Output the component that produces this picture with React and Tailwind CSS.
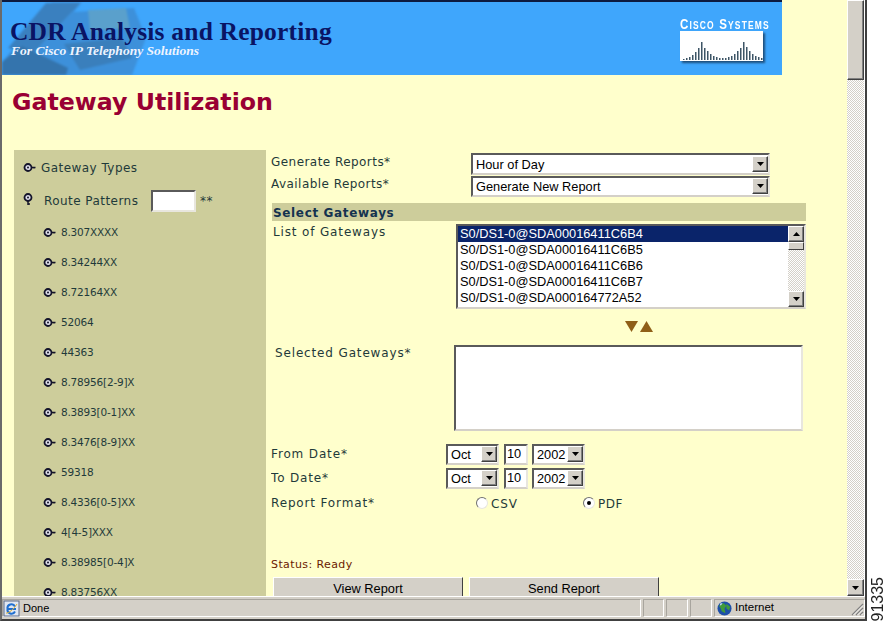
import React from 'react';

const patterns = ['8.307XXXX', '8.34244XX', '8.72164XX', '52064', '44363', '8.78956[2-9]X', '8.3893[0-1]XX', '8.3476[8-9]XX', '59318', '8.4336[0-5]XX', '4[4-5]XXX', '8.38985[0-4]X', '8.83756XX'];
const gateways = ['S0/DS1-0@SDA00016411C6B4', 'S0/DS1-0@SDA00016411C6B5', 'S0/DS1-0@SDA00016411C6B6', 'S0/DS1-0@SDA00016411C6B7', 'S0/DS1-0@SDA000164772A52'];
const bars = [1, 2, 3, 5, 8, 12, 18, 12, 9, 6, 4, 3, 2, 2, 2, 3, 4, 6, 9, 12, 18, 13, 9, 6, 4, 3, 2];

// round key-shaped tree bullet
function Bullet({ open, className = '' }) {
  return (
    <svg width="13" height="13" viewBox="0 0 13 13" className={`shrink-0 ${className}`}>
      {open ? <path d="M6 7v5M6 11h2" stroke="#14142a" strokeWidth="1.500" /> : <path d="M7 6.500h5.500M11 6.500v1" stroke="#14142a" strokeWidth="1.500" />}
      <circle cx={open ? 6 : 5} cy={open ? 4.500 : 6.500} r="3.500" fill="#dcdce8" stroke="#14142a" strokeWidth="1.800" />
      <circle cx={open ? 6 : 5} cy={open ? 4.500 : 6.500} r="1" fill="#14142a" />
    </svg>
  );
}

function ArrowBtn({ up, className }) {
  return (
    <div className={`flex items-center justify-center bg-[#d4d0c8] border border-t-white border-l-white border-r-[#404040] border-b-[#404040] shadow-[inset_-1px_-1px_0_#808080] ${className}`}>
      <svg width="7" height="4" viewBox="0 0 7 4">
        <path d={up ? 'M3.500 0L7 4H0z' : 'M0 0h7L3.500 4z'} fill="#000" />
      </svg>
    </div>
  );
}

function Dropdown({ value, className }) {
  return (
    <div className={`flex items-center bg-white border-2 border-t-[#5a5a5a] border-l-[#5a5a5a] border-r-[#e8e6de] border-b-[#d4d0c8] text-[12.800px] leading-[15px] text-black [font-family:'Liberation_Sans',sans-serif] ${className}`}>
      <span className="flex-1 pl-[3px]">{value}</span>
      <ArrowBtn className="w-[16px] h-[16px] shrink-0" />
    </div>
  );
}

function Radio({ checked }) {
  return (
    <span className="flex items-center justify-center w-[12px] h-[12px] rounded-full bg-white border border-t-[#707070] border-l-[#707070] border-r-[#e8e6de] border-b-[#e8e6de]">
      {checked && <span className="w-[4px] h-[4px] rounded-full bg-black" />}
    </span>
  );
}

function Label({ wide, className = '', children }) {
  return <div className={`text-[12px] leading-[14px] text-[#1f3a3a] ${wide ? 'tracking-[0.85px]' : 'tracking-[0.45px]'} ${className}`}>{children}</div>;
}

function Banner() {
  return (
    <div className="relative flex h-[73px] w-[780px] shrink-0 items-start justify-between overflow-hidden bg-[#3fa6fc]">
      <svg width="160" height="73" viewBox="0 0 160 73" className="absolute left-0 top-0 blur-[1px]">
        <path d="M0 60L50 0h30l-8 10 60-4 12 30-14 37H0z" fill="#3d90da" />
        <path d="M44 1h34L30 52 6 46z" fill="#3a80bf" />
        <path d="M86 8l38 -2 4 20-40 3z" fill="#5aa0cc" />
        <path d="M0 60L20 44l46 22-2 7H0z" fill="#3474ad" />
        <path d="M62 42l58-6 10 20-52 12z" fill="#3a7fbc" />
      </svg>
      <div className="relative pl-[8px] pt-[19px] [font-family:'Liberation_Serif',serif]">
        <div className="whitespace-nowrap text-[25.500px] font-bold leading-[22px] tracking-[0.2px] text-[#0a1464]">CDR Analysis and Reporting</div>
        <div className="whitespace-nowrap pl-[1px] pt-[1px] text-[13.500px] font-bold italic leading-[13px] text-[#eef4ff]">For Cisco IP Telephony Solutions</div>
      </div>
      <div className="relative mr-[19px] mt-[15px] w-[83px]">
        <div className="origin-left scale-x-[0.77] whitespace-nowrap text-[15px] font-bold leading-[14px] tracking-[1.5px] text-white [font-variant:small-caps] [font-family:'Liberation_Sans',sans-serif]">Cisco Systems</div>
        <svg width="83" height="30" viewBox="0 0 83 30" className="block bg-white shadow-[2px_2px_2px_#1d4f7d]">
          {bars.map((h, i) => (
            <rect key={i} x={3 + i * 3} y={29 - h} width="1.500" height={h} fill="#3d5566" />
          ))}
        </svg>
      </div>
    </div>
  );
}

function Sidebar() {
  return (
    <div className="ml-[12px] h-full w-[252px] shrink-0 overflow-hidden bg-[#cdcd9b] pt-[10px]">
      <div className="flex h-[15px] items-center pl-[9px]">
        <Bullet />
        <Label className="ml-[5px]">Gateway Types</Label>
      </div>
      <div className="mt-[15px] flex h-[22px] items-center pl-[8px]">
        <Bullet open className="-mt-[4px]" />
        <Label className="ml-[9px] w-[107px]">Route Patterns</Label>
        <div className="h-[22px] w-[45px] border-2 border-t-[#5a5a5a] border-l-[#5a5a5a] border-r-[#e8e6de] border-b-[#e8e6de] bg-white" />
        <Label className="ml-[4px]">**</Label>
      </div>
      <div className="mt-[13px] flex flex-col gap-[16px] pl-[29px]">
        {patterns.map((p) => (
          <div key={p} className="flex h-[14px] items-center">
            <Bullet />
            <div className="ml-[5px] text-[10.500px] leading-[14px] tracking-[-0.2px] text-[#1f3a3a]">{p}</div>
          </div>
        ))}
      </div>
    </div>
  );
}

function DateRow({ label, className }) {
  return (
    <div className={`flex h-[22px] items-center ${className}`}>
      <Label wide className="w-[175px]">{label}</Label>
      <Dropdown value="Oct" className="h-[21px] w-[53px]" />
      <div className="ml-[5px] flex h-[21px] w-[24px] items-center border-2 border-t-[#5a5a5a] border-l-[#5a5a5a] border-r-[#e8e6de] border-b-[#d4d0c8] bg-white pl-[1px] text-[12.800px] [font-family:'Liberation_Sans',sans-serif]">10</div>
      <Dropdown value="2002" className="ml-[4px] h-[21px] w-[53px]" />
    </div>
  );
}

function Form() {
  return (
    <div className="ml-[5px] w-[540px] shrink-0 overflow-hidden pt-[3px]">
      <div className="flex h-[22px] items-center">
        <Label className="w-[200px] -mt-[4px]">Generate Reports*</Label>
        <Dropdown value="Hour of Day" className="h-[22px] w-[299px]" />
      </div>
      <div className="flex h-[22px] items-center">
        <Label className="w-[200px] -mt-[4px]">Available Reports*</Label>
        <Dropdown value="Generate New Report" className="h-[21px] w-[299px]" />
      </div>
      <div className="mt-[6px] ml-[1px] flex h-[18px] w-[534px] items-center bg-[#cdcd9b] pl-[1px] pt-[1px] text-[12px] font-bold tracking-[0.65px] text-[#14324f]">Select Gateways</div>
      <div className="mt-[3px] flex">
        <Label wide className="ml-[2px] mt-[1px] w-[183px]">List of Gateways</Label>
        <div className="flex h-[85px] w-[350px] border-2 border-t-[#5a5a5a] border-l-[#5a5a5a] border-r-[#e8e6de] border-b-[#d4d0c8] bg-white text-[12.800px] leading-[16px] text-black [font-family:'Liberation_Sans',sans-serif]">
          <div className="flex-1">
            {gateways.map((g, i) => (
              <div key={g} className={`pl-[2px] ${i === 0 ? 'bg-[#0a246a] text-white' : ''}`}>{g}</div>
            ))}
          </div>
          <div className="flex w-[16px] flex-col bg-[repeating-conic-gradient(#d4d0c8_0_25%,#ffffff_0_50%)] bg-[length:2px_2px]">
            <ArrowBtn up className="h-[16px]" />
            <div className="h-[8px] bg-[#d4d0c8] border border-t-white border-l-white border-r-[#404040] border-b-[#404040]" />
            <div className="flex-1" />
            <ArrowBtn className="h-[16px]" />
          </div>
        </div>
      </div>
      <div className="mt-[10px] ml-[354px] flex h-[14px] items-center gap-[1px]">
        <svg width="14" height="11" viewBox="0 0 14 11"><path d="M0 0h13L6.500 11z" fill="#8f5f18" /></svg>
        <svg width="14" height="11" viewBox="0 0 14 11"><path d="M6.500 0L13 11H0z" fill="#8f5f18" /></svg>
      </div>
      <div className="mt-[12px] flex">
        <Label wide className="ml-[4px] mt-[1px] w-[179px]">Selected Gateways*</Label>
        <div className="h-[86px] w-[349px] border-2 border-t-[#5a5a5a] border-l-[#5a5a5a] border-r-[#e8e6de] border-b-[#d4d0c8] bg-white" />
      </div>
      <DateRow label="From Date*" className="mt-[12px]" />
      <DateRow label="To Date*" className="mt-[2px]" />
      <div className="mt-[6px] flex h-[16px] items-center">
        <Label wide className="w-[205px]">Report Format*</Label>
        <Radio />
        <Label wide className="ml-[3px] w-[92px] mt-[2px]">CSV</Label>
        <Radio checked />
        <Label className="ml-[3px] mt-[2px]">PDF</Label>
      </div>
      <div className="mt-[47px] text-[11px] leading-[14px] tracking-[0.4px] text-[#6b1a00]">Status: Ready</div>
      <div className="mt-[5px] ml-[2px] flex gap-[6px]">
        {['View Report', 'Send Report'].map((b) => (
          <div key={b} className="flex h-[24px] w-[190px] justify-center border border-t-white border-l-white border-r-[#404040] bg-[#d4d0c8] pt-[4px] text-[12.800px] leading-[14px] text-black [font-family:'Liberation_Sans',sans-serif]">{b}</div>
        ))}
      </div>
    </div>
  );
}

function Scrollbar() {
  return (
    <div className="flex w-[17px] shrink-0 flex-col bg-[repeating-conic-gradient(#d4d0c8_0_25%,#ffffff_0_50%)] bg-[length:2px_2px]">
      <div className="h-[80px] bg-[#d4d0c8] border border-t-white border-l-white border-r-[#404040] border-b-[#404040] shadow-[inset_-1px_-1px_0_#808080]" />
      <div className="flex-1" />
      <ArrowBtn className="h-[17px]" />
    </div>
  );
}

function StatusBar() {
  return (
    <div className="flex h-[23px] shrink-0 items-stretch gap-[2px] border-t border-t-white bg-[#d4d0c8] pt-[2px] pb-[2px] text-black [font-family:'Liberation_Sans',sans-serif]">
      <div className="flex w-[639px] items-center border border-t-[#a8a59e] border-l-[#a8a59e] border-r-white border-b-white">
        <svg width="17" height="17" viewBox="0 0 17 17">
          <rect x="1" y="1" width="15" height="15" fill="#dfe6f2" stroke="#5a6a8a" />
          <path d="M13 9H4.500a4 4 0 0 1 7.500-2.500M4.500 9a4 4 0 0 0 7.500 2.500" fill="none" stroke="#1f6fd0" strokeWidth="2" />
          <path d="M3 13c2 1 8-4 11-9" fill="none" stroke="#e0b030" strokeWidth="1" />
        </svg>
        <span className="ml-[3px] text-[11px]">Done</span>
      </div>
      <div className="w-[21px] border border-t-[#a8a59e] border-l-[#a8a59e] border-r-white border-b-white" />
      <div className="w-[22px] border border-t-[#a8a59e] border-l-[#a8a59e] border-r-white border-b-white" />
      <div className="w-[22px] border border-t-[#a8a59e] border-l-[#a8a59e] border-r-white border-b-white" />
      <div className="flex flex-1 items-center border border-t-[#a8a59e] border-l-[#a8a59e] border-r-white border-b-white pl-[2px]">
        <svg width="15" height="15" viewBox="0 0 16 16">
          <circle cx="8" cy="8" r="7.500" fill="#1d4fa8" />
          <path d="M2 5l5-3 3 3-2 3 1 5-4-2-1-3zM10 3l4 3-1 4-3-2z" fill="#3f9a3a" />
          <path d="M3 3l3-1-2 3z" fill="#d8e8ff" />
        </svg>
        <span className="ml-[3px] text-[11.500px]">Internet</span>
        <svg width="13" height="13" viewBox="0 0 13 13" className="ml-auto self-end">
          <path d="M12 1L1 12M12 5L5 12M12 9L9 12" stroke="#808080" strokeWidth="1.200" />
          <path d="M12 2.500L2.500 12M12 6.500L6.500 12M12 10.500L10.500 12" stroke="#ffffff" strokeWidth="0.800" />
        </svg>
      </div>
    </div>
  );
}

export default function App() {
  return (
    <div className="flex h-[621px] w-[888px] overflow-hidden bg-white [font-family:'DejaVu_Sans',sans-serif]">
      <div className="flex w-[867px] shrink-0 flex-col border-b-2 border-l-2 border-r-2 border-b-[#404040] border-l-[#6a6a6a] border-r-[#404040]">
        <div className="flex min-h-0 flex-1">
          <div className="flex w-[845px] shrink-0 flex-col overflow-hidden bg-[#ffffcc]">
            <div className="h-[2px] w-[780px] shrink-0 bg-[#0c1a40]" />
            <Banner />
            <h1 className="mt-[11px] h-[36px] shrink-0 pl-[10px] text-[23.700px] font-bold leading-[32px] text-[#990033]">Gateway Utilization</h1>
            <div className="mt-[28px] flex min-h-0 flex-1">
              <Sidebar />
              <Form />
            </div>
          </div>
          <Scrollbar />
        </div>
        <StatusBar />
      </div>
      <div className="flex flex-1 items-end justify-center">
        <div className="rotate-180 text-[16px] leading-[18px] text-[#222] [writing-mode:vertical-rl] [font-family:'Liberation_Sans',sans-serif]">91335</div>
      </div>
    </div>
  );
}
